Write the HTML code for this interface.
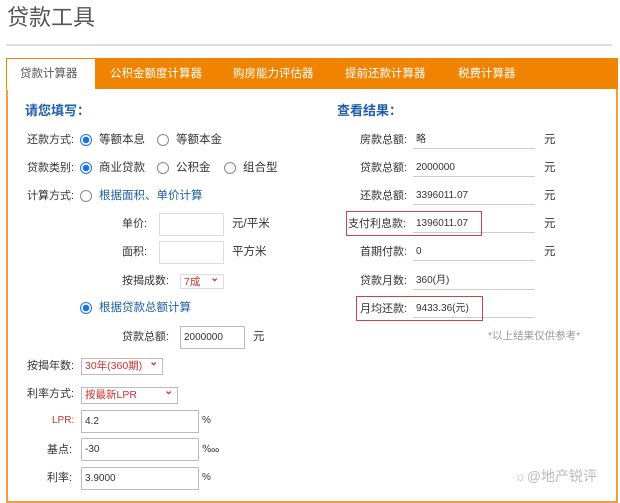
<!DOCTYPE html>
<html><head><meta charset="utf-8"><style>
*{margin:0;padding:0;box-sizing:border-box}
body{width:620px;height:500px;background:#fff;font-family:"Liberation Sans","Noto Sans CJK SC",sans-serif;font-size:11.5px;color:#333;position:relative;overflow:hidden}
.a{position:absolute;white-space:nowrap;line-height:16px}
.r{position:absolute;width:12px;height:12px;border-radius:50%;border:1px solid #888;background:#fff}
.r.on{border-color:#1a73e8;background:radial-gradient(circle,#1a73e8 3px,#fff 3.5px)}
.in{position:absolute;border:1px solid #bbb;background:#fff;font-size:10px;padding-left:3px;padding-top:4px;line-height:14px}
.sel{position:absolute;border:1px solid #bbb;background:#fff;color:#c33;font-size:10.5px;padding-left:3px;line-height:14px}
.sel:after{content:"⌄";position:absolute;right:4px;top:-4px;color:#c33;font-weight:bold}
.ul{position:absolute;left:413px;width:122px;border-bottom:1px solid #ccc;height:1px}
.val{position:absolute;left:416px;font-size:10px;line-height:16px}
.lab{position:absolute;left:360px;line-height:16px;font-size:11px}
.box{position:absolute;border:1.5px solid #c44;}
</style></head><body>
<div class="a" style="left:7px;top:4px;font-size:22px;line-height:28px;color:#555">贷款工具</div>
<div style="position:absolute;left:6px;top:44px;width:606px;height:2px;background:#ddd"></div>
<div style="position:absolute;left:6px;top:58px;width:612px;height:445px;border:2px solid #f0a040;border-top:none"></div>
<div style="position:absolute;left:6px;top:58px;width:612px;height:31px;background:#f08300"></div>
<div style="position:absolute;left:7px;top:59px;width:88px;height:31px;background:#fff"></div>
<div class="a" style="left:20px;top:66px;color:#555">贷款计算器</div>
<div class="a" style="left:110px;top:66px;color:#fff">公积金额度计算器</div>
<div class="a" style="left:233px;top:66px;color:#fff">购房能力评估器</div>
<div class="a" style="left:345px;top:66px;color:#fff">提前还款计算器</div>
<div class="a" style="left:458px;top:66px;color:#fff">税费计算器</div>

<div class="a" style="left:25px;top:103px;color:#1f5ea8;font-weight:bold;font-size:13px">请您填写：</div>
<div class="a" style="left:337px;top:103px;color:#1f5ea8;font-weight:bold;font-size:13px">查看结果：</div>

<div class="a" style="left:27px;top:132px;font-size:11px">还款方式:</div>
<div class="r on" style="left:80px;top:134px"></div><div class="a" style="left:99px;top:132px">等额本息</div>
<div class="r" style="left:157px;top:134px"></div><div class="a" style="left:176px;top:132px">等额本金</div>
<div class="a" style="left:27px;top:160px;font-size:11px">贷款类别:</div>
<div class="r on" style="left:80px;top:162px"></div><div class="a" style="left:99px;top:160px">商业贷款</div>
<div class="r" style="left:157px;top:162px"></div><div class="a" style="left:176px;top:160px">公积金</div>
<div class="r" style="left:224px;top:162px"></div><div class="a" style="left:243px;top:160px">组合型</div>
<div class="a" style="left:27px;top:188px;font-size:11px">计算方式:</div>
<div class="r" style="left:80px;top:190px"></div><div class="a" style="left:99px;top:188px;color:#1f5ea8">根据面积、单价计算</div>
<div class="a" style="left:122px;top:216px;font-size:11px">单价:</div><div class="in" style="left:159px;top:213px;width:65px;height:23px;border-color:#ddd"></div><div class="a" style="left:232px;top:216px">元/平米</div>
<div class="a" style="left:122px;top:244px;font-size:11px">面积:</div><div class="in" style="left:159px;top:241px;width:65px;height:23px;border-color:#ddd"></div><div class="a" style="left:232px;top:244px">平方米</div>
<div class="a" style="left:122px;top:273px;font-size:11px">按揭成数:</div><div class="sel" style="left:180px;top:274px;width:44px;height:15px;border-color:#ddd">7成</div>
<div class="r on" style="left:80px;top:302px"></div><div class="a" style="left:99px;top:300px;color:#1f5ea8">根据贷款总额计算</div>
<div class="a" style="left:122px;top:329px;font-size:11px">贷款总额:</div><div class="in" style="left:180px;top:326px;width:65px;height:23px">2000000</div><div class="a" style="left:253px;top:329px">元</div>
<div class="a" style="left:27px;top:358px;font-size:11px">按揭年数:</div><div class="sel" style="left:81px;top:358px;width:82px;height:17px">30年(360期)</div>
<div class="a" style="left:27px;top:386px;font-size:11px">利率方式:</div><div class="sel" style="left:81px;top:387px;width:97px;height:17px">按最新LPR</div>
<div class="a" style="left:52px;top:413px;color:#c33;font-size:10px">LPR:</div><div class="in" style="left:81px;top:410px;width:118px;height:23px">4.2</div><div class="a" style="left:202px;top:413px;font-size:10px">%</div>
<div class="a" style="left:47px;top:442px;font-size:11px">基点:</div><div class="in" style="left:81px;top:438px;width:118px;height:23px">-30</div><div class="a" style="left:202px;top:442px;font-size:10px">‱</div>
<div class="a" style="left:47px;top:470px;font-size:11px">利率:</div><div class="in" style="left:81px;top:467px;width:118px;height:23px">3.9000</div><div class="a" style="left:202px;top:470px;font-size:10px">%</div>

<div class="lab" style="top:132px">房款总额:</div><div class="val" style="top:132px">略</div><div class="ul" style="top:148px"></div><div class="a" style="left:544px;top:132px">元</div>
<div class="lab" style="top:160px">贷款总额:</div><div class="val" style="top:160px">2000000</div><div class="ul" style="top:176px"></div><div class="a" style="left:544px;top:160px">元</div>
<div class="lab" style="top:188px">还款总额:</div><div class="val" style="top:188px">3396011.07</div><div class="ul" style="top:204px"></div><div class="a" style="left:544px;top:188px">元</div>
<div class="lab" style="top:216px;left:348px">支付利息款:</div><div class="val" style="top:216px">1396011.07</div><div class="ul" style="top:232px"></div><div class="a" style="left:544px;top:216px">元</div>
<div class="box" style="left:346px;top:211px;width:136px;height:25px"></div>
<div class="lab" style="top:244px">首期付款:</div><div class="val" style="top:244px">0</div><div class="ul" style="top:260px"></div><div class="a" style="left:544px;top:244px">元</div>
<div class="lab" style="top:273px">贷款月数:</div><div class="val" style="top:273px">360(月)</div><div class="ul" style="top:289px"></div>
<div class="lab" style="top:301px">月均还款:</div><div class="val" style="top:301px">9433.36(元)</div><div class="ul" style="top:317px"></div>
<div class="box" style="left:356px;top:296px;width:127px;height:25px"></div>
<div class="a" style="left:488px;top:328px;color:#999;font-size:10.5px">*以上结果仅供参考*</div>
<div class="a" style="left:514px;top:468px;color:#bbb;font-size:14px">☼@地产锐评</div>
</body></html>
